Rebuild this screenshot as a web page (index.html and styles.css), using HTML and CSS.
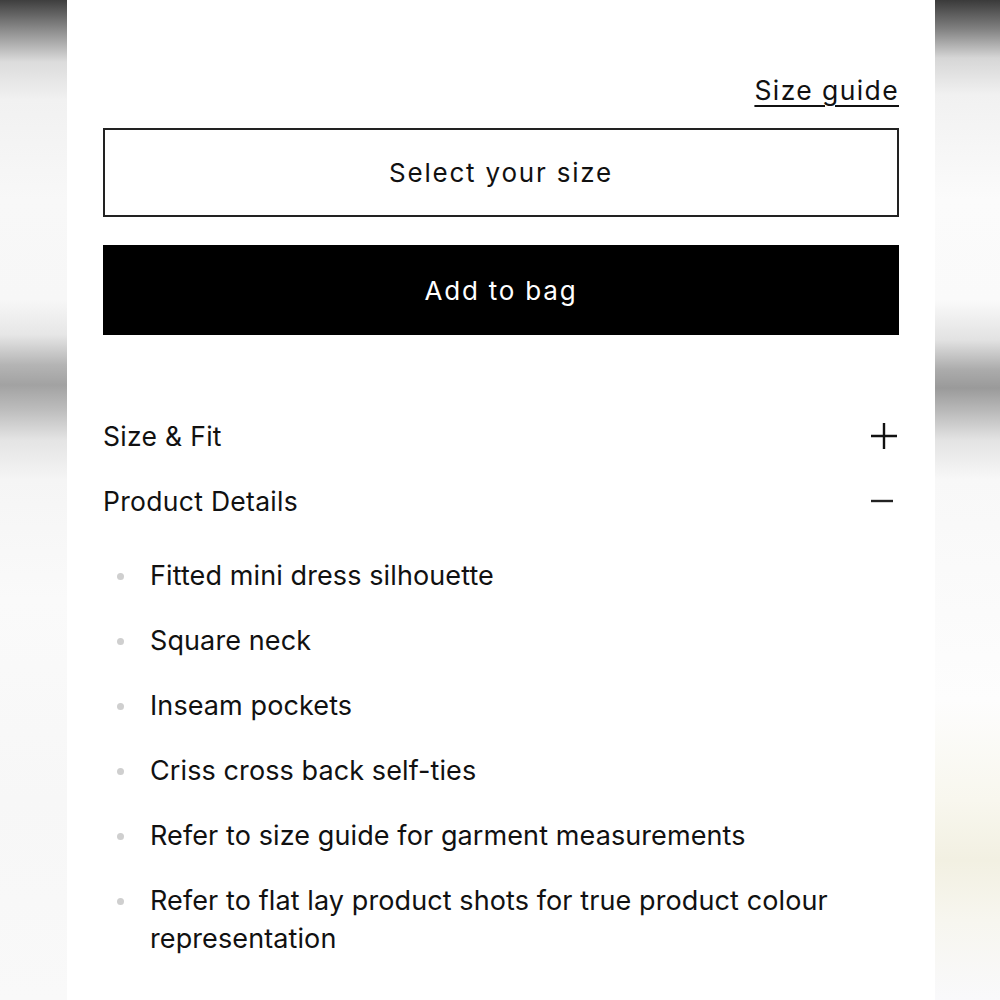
FILE: index.html
```html
<!DOCTYPE html>
<html lang="en">
<head>
<meta charset="utf-8">
<title>Product</title>
<link rel="stylesheet" href="styles.css">
</head>
<body>
<div class="side side-left"></div>
<main class="panel">
  <div class="guide-row"><a class="size-guide" href="#">Size guide</a></div>
  <button class="select-size">Select your size</button>
  <button class="add-bag">Add to bag</button>
  <section class="accordion">
    <div class="acc-row">
      <span class="acc-title">Size &amp; Fit</span>
      <svg class="acc-icon" width="28" height="28" viewBox="0 0 28 28"><path d="M14 1V27M1 14H27" stroke="#111" stroke-width="2.4" fill="none"/></svg>
    </div>
    <div class="acc-row">
      <span class="acc-title">Product Details</span>
      <svg class="acc-icon" width="28" height="28" viewBox="0 0 28 28"><path d="M1 14H23" stroke="#222" stroke-width="2.4" fill="none"/></svg>
    </div>
    <ul class="details">
      <li>Fitted mini dress silhouette</li>
      <li>Square neck</li>
      <li>Inseam pockets</li>
      <li>Criss cross back self-ties</li>
      <li>Refer to size guide for garment measurements</li>
      <li>Refer to flat lay product shots for true product colour representation</li>
    </ul>
  </section>
</main>
<div class="side side-right"></div>
</body>
</html>
```
FILE: styles.css
```css
html, body {
  margin: 0;
  padding: 0;
  height: 100%;
}
body {
  display: flex;
  min-height: 1000px;
  background: #fff;
  font-family: Inter, "Noto Sans", "Liberation Sans", sans-serif;
  color: #111;
  overflow: hidden;
}
.side {
  flex: 0 0 67px;
  height: 1000px;
}
.side-left {
  background: linear-gradient(to bottom,
    #3e3e3e 0px, #8c8c8c 30px, #dcdcdc 62px, #f1f1f1 100px,
    #f8f8f8 200px, #f7f7f7 300px, #e6e6e6 335px, #b4b4b4 365px,
    #a2a2a2 385px, #bdbdbd 410px, #e4e4e4 440px, #f5f5f5 480px,
    #fafafa 600px, #f7f7f7 800px, #f9f9f9 1000px);
}
.side-right {
  flex-basis: 65px;
  background: linear-gradient(to bottom,
    #3a3a3a 0px, #7e7e7e 28px, #d6d6d6 58px, #f1f1f1 95px,
    #fbfbfb 200px, #fafafa 300px, #e2e2e2 340px, #ababab 370px,
    #9a9a9a 388px, #b8b8b8 410px, #e3e3e3 440px, #f8f8f8 480px,
    #fdfdfd 700px, #f8f7ee 800px, #f2f0e2 860px, #f7f6ef 920px, #f9f9fb 1000px);
}
.panel {
  flex: 0 0 868px;
  box-sizing: border-box;
  padding: 74px 36px 0 36px;
  background: #fff;
}
.guide-row {
  display: flex;
  justify-content: flex-end;
  height: 32px;
  line-height: 32px;
}
.size-guide {
  color: #111;
  font-size: 26.5px;
  letter-spacing: 1.4px;
  text-decoration: underline;
  text-decoration-thickness: 2px;
  text-underline-offset: 5px;
}
.select-size, .add-bag {
  display: flex;
  width: 100%;
  align-items: center;
  justify-content: center;
  font-family: inherit;
  font-size: 26px;
  letter-spacing: 1.8px;
  box-sizing: border-box;
  cursor: pointer;
}
.select-size {
  margin-top: 22px;
  height: 89px;
  background: #fff;
  color: #111;
  border: 2px solid #222;
}
.add-bag {
  margin-top: 28px;
  height: 90px;
  background: #000;
  color: #fff;
  border: none;
}
.accordion {
  margin-top: 82px;
}
.acc-row {
  display: flex;
  justify-content: space-between;
  align-items: center;
  height: 38px;
  margin-bottom: 27px;
  font-size: 26.5px;
  letter-spacing: 0.3px;
}
.acc-row + .acc-row {
  margin-bottom: 37px;
}
.acc-icon {
  margin-right: 1px;
}
.details {
  list-style: none;
  margin: 0;
  padding: 0;
}
.details li {
  position: relative;
  padding-left: 47px;
  font-size: 27px;
  letter-spacing: 0.1px;
  line-height: 38px;
  margin-bottom: 27px;
}
.details li::before {
  content: "";
  position: absolute;
  left: 14px;
  top: 16px;
  width: 7px;
  height: 7px;
  border-radius: 50%;
  background: #cfcfcf;
}
```
